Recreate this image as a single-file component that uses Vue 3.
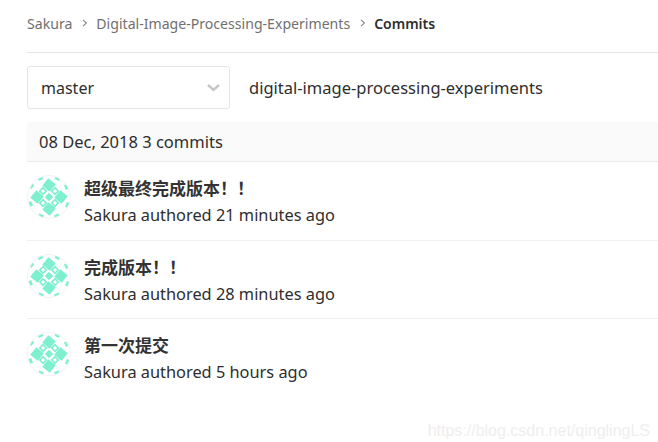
<script setup>
const crumbs = ['Sakura', 'Digital-Image-Processing-Experiments']

const commits = [
  { id: 1, title: '超级最终完成版本！！', meta: 'Sakura authored 21 minutes ago' },
  { id: 2, title: '完成版本！！', meta: 'Sakura authored 28 minutes ago' },
  { id: 3, title: '第一次提交', meta: 'Sakura authored 5 hours ago' }
]

// identicon pieces, in a 44px box
const bigDiamonds = [[22, 10], [34, 22], [10, 22], [22, 34]]
const smallDiamonds = [[16, 16], [28, 16], [16, 28], [28, 28]]
const edges = [[13.5, 3.5, -25], [30.5, 3.5, 25], [4.5, 11, -55], [39.5, 12, 65], [3.5, 29, 70], [40.5, 30, -70], [14, 41, 20], [30, 41, -20]]
</script>

<template>
  <div class="page">
    <nav class="crumbs">
      <template v-for="c in crumbs" :key="c">
        <a class="crumb">{{ c }}</a>
        <svg class="sep" width="6" height="8" viewBox="0 0 6 8" fill="none" stroke="#8a8a8a" stroke-width="1.1">
          <polyline points="1,0.8 4.4,4 1,7.2" />
        </svg>
      </template>
      <strong class="current">Commits</strong>
    </nav>

    <div class="toolbar">
      <div class="branch">
        <span>master</span>
        <svg width="13" height="8" viewBox="0 0 13 8" fill="none" stroke="#c6c6c6" stroke-width="2.4">
          <polyline points="1,1 6.5,6 12,1" />
        </svg>
      </div>
      <div class="repo">digital-image-processing-experiments</div>
    </div>

    <div class="day">08 Dec, 2018 3 commits</div>

    <ul class="commits">
      <li v-for="item in commits" :key="item.id" class="commit">
        <svg class="avatar" width="44" height="44" viewBox="0 0 44 44">
          <defs>
            <clipPath id="disc"><circle cx="22" cy="22" r="21" /></clipPath>
          </defs>
          <circle cx="22" cy="22" r="21.5" fill="#fff" stroke="#f2f2f2" />
          <g fill="#7ff0cf">
            <rect v-for="d in bigDiamonds" :key="d.join()" :x="d[0] - 4.8" :y="d[1] - 4.8" width="9.6" height="9.6" rx="0.5" :transform="`rotate(40 ${d[0]} ${d[1]})`" />
            <rect x="19" y="19" width="6" height="6" transform="rotate(45 22 22)" />
            <g clip-path="url(#disc)">
              <rect v-for="e in edges" :key="e.join()" :x="e[0] - 2.5" :y="e[1] - 1.7" width="5" height="3.4" :transform="`rotate(${e[2]} ${e[0]} ${e[1]})`" />
            </g>
          </g>
          <g fill="none" stroke="#7ff0cf" stroke-width="1.6">
            <rect v-for="d in smallDiamonds" :key="d.join()" :x="d[0] - 2.3" :y="d[1] - 2.3" width="4.6" height="4.6" :transform="`rotate(45 ${d[0]} ${d[1]})`" />
          </g>
        </svg>
        <div class="info">
          <div class="title">{{ item.title }}</div>
          <div class="meta">{{ item.meta }}</div>
        </div>
      </li>
    </ul>

    <div class="mark">https://blog.csdn.net/qinglingLS</div>
  </div>
</template>

<style>
html, body {
  margin: 0;
  background: #fff;
  overflow: hidden;
}
</style>

<style scoped>
.page {
  position: relative;
  width: 658px;
  height: 442px;
  box-sizing: border-box;
  padding-left: 27px;
  overflow: hidden;
  font-family: "Noto Sans", "Noto Sans CJK SC", sans-serif;
  color: #2e2e2e;
}

.crumbs {
  display: flex;
  align-items: center;
  height: 53px;
  box-sizing: border-box;
  padding-bottom: 6px;
  border-bottom: 1px solid #e5e5e5;
  font-size: 14.1px;
}
.crumb {
  color: #707070;
}
.sep {
  margin: 0 8px 0 10px;
}
.current {
  font-size: 14px;
  font-weight: 600;
  color: #2e2e2e;
}

.toolbar {
  display: flex;
  align-items: center;
  margin-top: 13px;
  gap: 19px;
}
.branch {
  display: flex;
  align-items: center;
  justify-content: space-between;
  box-sizing: border-box;
  width: 203px;
  height: 43px;
  padding: 0 9px 0 13px;
  border: 1px solid #e5e5e5;
  border-radius: 3px;
  font-size: 16px;
}
.repo {
  font-size: 16.5px;
}

.day {
  margin-top: 13px;
  height: 40px;
  line-height: 39px;
  box-sizing: border-box;
  padding-left: 12px;
  background: #fafafa;
  border-bottom: 1px solid #eaeaea;
  font-size: 16.5px;
}

.commits {
  list-style: none;
  margin: 0;
  padding: 0;
}
.commit {
  display: flex;
  height: 78.5px;
  box-sizing: border-box;
  padding-top: 13px;
  border-bottom: 1px solid #efefef;
}
.commit:last-child {
  border-bottom: none;
}
.avatar {
  flex: none;
}
.info {
  margin-left: 13px;
  padding-top: 1px;
}
.title {
  font-size: 17px;
  line-height: 26px;
  font-weight: 700;
  color: #333;
}
.meta {
  font-size: 16.35px;
  line-height: 27px;
}

.mark {
  position: absolute;
  right: 8px;
  bottom: 2px;
  font-family: "Liberation Sans", sans-serif;
  font-size: 16px;
  color: #eeeeee;
}
</style>
